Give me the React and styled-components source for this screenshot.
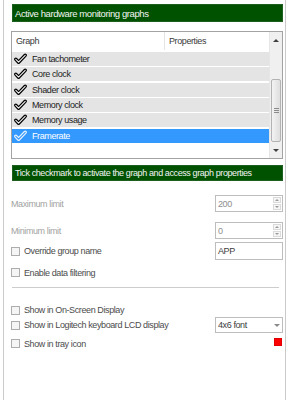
import React from "react";
import styled, { createGlobalStyle } from "styled-components";

const Global = createGlobalStyle`
  html, body { margin: 0; padding: 0; background: #ffffff; }
  body { font-family: "Liberation Sans", Arial, sans-serif; font-size: 9px; letter-spacing: -0.4px; }
  * { box-sizing: border-box; }
`;

const Panel = styled.div`
  margin-left: 3px;
  width: 283px;
  height: 400px;
  border-left: 1px solid #cacaca;
  border-right: 1px solid #cacaca;
  padding: 4px 2px 0 7px;
  display: flex;
  flex-direction: column;
`;

const GreenBar = styled.div`
  margin-left: 1px;
  margin-top: ${(p) => p.$mt || 0}px;
  height: ${(p) => p.$h}px;
  background: #005200;
  border: 1px solid #1e5e1e;
  color: #f4f4f4;
  display: flex;
  align-items: center;
  padding-left: 2px;
  font-size: ${(p) => p.$fs}px;
`;

const ListBox = styled.div`
  margin-top: 9px;
  height: 128px;
  border: 1px solid #a3a3a3;
  display: flex;
  background: #fff;
`;

const ListMain = styled.div`
  flex: 1;
  display: flex;
  flex-direction: column;
`;

const Header = styled.div`
  height: 18px;
  display: flex;
  color: #3a3a3a;
`;

const HeaderCell = styled.div`
  width: ${(p) => (p.$w ? `${p.$w}px` : "auto")};
  flex: ${(p) => (p.$w ? "none" : 1)};
  border-right: ${(p) => (p.$w ? "1px solid #e4e4e4" : "none")};
  display: flex;
  align-items: center;
  padding-left: ${(p) => p.$pl}px;
`;

const Rows = styled.div`
  display: flex;
  flex-direction: column;
  gap: 1.33px;
  padding-top: 2px;
`;

const Row = styled.div`
  height: 14px;
  display: flex;
  align-items: center;
  padding-left: 2px;
  background: ${(p) => (p.$sel ? "#3399ff" : "#e4e4e4")};
  color: ${(p) => (p.$sel ? "#ffffff" : "#1c1c1c")};
`;

const CheckWrap = styled.span`
  width: 13px;
  height: 12px;
  margin-right: 5px;
  display: flex;
`;

const Scrollbar = styled.div`
  width: 13px;
  background: #f0f0f0;
  border-left: 1px solid #e6e6e6;
  display: flex;
  flex-direction: column;
`;

const ArrowBtn = styled.div`
  height: 16px;
  display: flex;
  align-items: center;
  justify-content: center;
  &::after {
    content: "";
    width: 0;
    height: 0;
    border-left: 3px solid transparent;
    border-right: 3px solid transparent;
    ${(p) => (p.$down ? "border-top: 3px solid #404040;" : "border-bottom: 3px solid #404040;")}
  }
`;

const Track = styled.div`
  flex: 1;
  display: flex;
  flex-direction: column;
  justify-content: flex-end;
  padding: 0 1px;
`;

const Thumb = styled.div`
  height: 63px;
  border: 1px solid #b3b3b3;
  border-radius: 2px;
  background: linear-gradient(to right, #f3f3f3, #dedede);
  display: flex;
  flex-direction: column;
  align-items: center;
  justify-content: center;
  gap: 1px;
`;

const Grip = styled.span`
  width: 5px;
  height: 1px;
  background: #8a8a8a;
`;

const FormRow = styled.div`
  margin-top: ${(p) => p.$mt}px;
  height: ${(p) => p.$h}px;
  display: flex;
  align-items: center;
  gap: 4px;
`;

const Label = styled.span`
  flex: 1;
  color: ${(p) => (p.$dim ? "#a2a2a2" : "#4c4c4c")};
`;

const Box = styled.span`
  width: 9px;
  height: 9px;
  border: 1px solid #adadad;
  background: #f5f5f5;
  flex: none;
`;

const Field = styled.div`
  width: 68px;
  height: ${(p) => p.$h}px;
  border: 1px solid #bdbdbd;
  background: #fff;
  display: flex;
  align-items: center;
  padding-left: 2px;
  color: ${(p) => (p.$dim ? "#8e8e8e" : "#3c3c3c")};
`;

const FieldText = styled.span`
  flex: 1;
`;

const Spin = styled.div`
  width: 9px;
  height: 100%;
  padding: 1px 1px 1px 0;
  display: flex;
  flex-direction: column;
  gap: 1px;
`;

const SpinBtn = styled.span`
  flex: 1;
  border: 1px solid #dadada;
  background: #f6f6f6;
  display: flex;
  align-items: center;
  justify-content: center;
  &::after {
    content: "";
    border-left: 2px solid transparent;
    border-right: 2px solid transparent;
    ${(p) => (p.$down ? "border-top: 2px solid #9a9a9a;" : "border-bottom: 2px solid #9a9a9a;")}
  }
`;

const DropArrow = styled.span`
  width: 10px;
  display: flex;
  justify-content: center;
  &::after {
    content: "";
    border-left: 3px solid transparent;
    border-right: 3px solid transparent;
    border-top: 3px solid #8a8a8a;
  }
`;

const Separator = styled.div`
  margin-top: 6px;
  margin-left: 1px;
  margin-right: 4px;
  height: 1px;
  background: #cdcdcd;
`;

const Swatch = styled.span`
  width: 8px;
  height: 8px;
  background: #ff0000;
  border: 1px solid #e00000;
  margin-right: 1px;
  margin-bottom: 3px;
`;

function Check({ sel }) {
  const d = "M1.8 6.3 L4.6 9.2 L11.2 2.3";
  return (
    <CheckWrap>
      <svg width="13" height="12" viewBox="0 0 13 12">
        <path d={d} fill="none" stroke={sel ? "#e6f1ff" : "#000"} strokeWidth="3.4" strokeLinecap="round" strokeLinejoin="round" />
        <path d={d} fill="none" stroke={sel ? "#3399ff" : "#f2f2f2"} strokeWidth="1.1" strokeLinecap="round" strokeLinejoin="round" />
      </svg>
    </CheckWrap>
  );
}

const graphs = [
  { name: "Fan tachometer" },
  { name: "Core clock" },
  { name: "Shader clock" },
  { name: "Memory clock" },
  { name: "Memory usage" },
  { name: "Framerate", sel: true },
];

export default function App() {
  return (
    <>
      <Global />
      <Panel>
        <GreenBar $h={18} $fs={9.5}>Active hardware monitoring graphs</GreenBar>
        <ListBox>
          <ListMain>
            <Header>
              <HeaderCell $w={153} $pl={4}>Graph</HeaderCell>
              <HeaderCell $pl={4}>Properties</HeaderCell>
            </Header>
            <Rows>
              {graphs.map((g) => (
                <Row key={g.name} $sel={g.sel}>
                  <Check sel={g.sel} />
                  {g.name}
                </Row>
              ))}
            </Rows>
          </ListMain>
          <Scrollbar>
            <ArrowBtn />
            <Track>
              <Thumb>
                <Grip />
                <Grip />
                <Grip />
              </Thumb>
            </Track>
            <ArrowBtn $down />
          </Scrollbar>
        </ListBox>
        <GreenBar $h={16} $mt={6} $fs={9}>Tick checkmark to activate the graph and access graph properties</GreenBar>

        <FormRow $mt={14} $h={17}>
          <Label $dim>Maximum limit</Label>
          <Field $h={17} $dim>
            <FieldText>200</FieldText>
            <Spin>
              <SpinBtn />
              <SpinBtn $down />
            </Spin>
          </Field>
        </FormRow>
        <FormRow $mt={10} $h={17}>
          <Label $dim>Minimum limit</Label>
          <Field $h={17} $dim>
            <FieldText>0</FieldText>
            <Spin>
              <SpinBtn />
              <SpinBtn $down />
            </Spin>
          </Field>
        </FormRow>
        <FormRow $mt={3} $h={18}>
          <Box />
          <Label>Override group name</Label>
          <Field $h={18}>
            <FieldText>APP</FieldText>
          </Field>
        </FormRow>
        <FormRow $mt={4} $h={17}>
          <Box />
          <Label>Enable data filtering</Label>
        </FormRow>
        <Separator />
        <FormRow $mt={15} $h={14}>
          <Box />
          <Label>Show in On-Screen Display</Label>
        </FormRow>
        <FormRow $mt={0} $h={16}>
          <Box />
          <Label>Show in Logitech keyboard LCD display</Label>
          <Field $h={16}>
            <FieldText>4x6 font</FieldText>
            <DropArrow />
          </Field>
        </FormRow>
        <FormRow $mt={3} $h={15}>
          <Box />
          <Label>Show in tray icon</Label>
          <Swatch />
        </FormRow>
      </Panel>
    </>
  );
}
